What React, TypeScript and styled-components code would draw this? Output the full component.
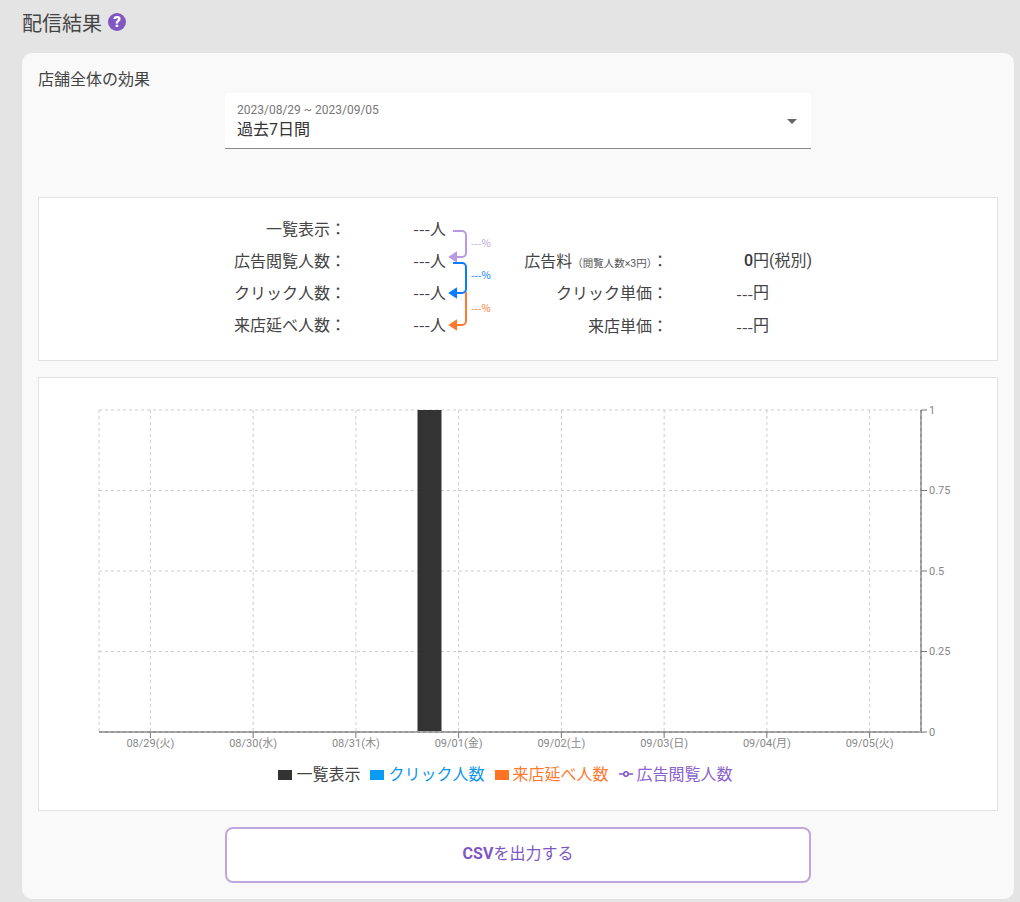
import React from 'react';
import styled, { createGlobalStyle } from 'styled-components';

const FONT = `Roboto, "Noto Sans CJK JP", sans-serif`;
const CJK_FONT = `"Noto Sans CJK JP", Roboto, sans-serif`;

const GlobalStyle = createGlobalStyle`
  html, body {
    margin: 0;
    background-color: #e4e4e4;
    overflow: hidden;
  }
  body {
    font-family: ${FONT};
    color: #444;
  }
`;

const Page = styled.div`
  width: 1020px;
  height: 902px;
  padding: 0 6px 0 22px;
  box-sizing: border-box;
`;

const Heading = styled.div`
  height: 53px;
  padding-bottom: 9px;
  box-sizing: border-box;
  display: flex;
  align-items: center;
  gap: 6px;
  font-size: 20px;
  color: #444;
`;

const HelpIcon = styled.span`
  width: 18px;
  height: 18px;
  border-radius: 50%;
  background-color: #7e57c2;
  color: #fff;
  font-size: 15px;
  font-weight: 900;
  line-height: 18px;
  text-align: center;
`;

const Card = styled.div`
  height: 846px;
  padding: 16px;
  box-sizing: border-box;
  background-color: #f9f9f9;
  border-radius: 10px;
`;

const CardTitle = styled.div`
  height: 24px;
  line-height: 22px;
  font-size: 16px;
  color: #444;
`;

const Select = styled.div`
  position: relative;
  width: 586px;
  height: 56px;
  margin: 0 0 48px 187px;
  padding: 9px 12px 0;
  box-sizing: border-box;
  background-color: #fff;
  border-bottom: 1px solid #8a8a8a;
  border-radius: 4px 4px 0 0;
`;

const SelectRange = styled.div`
  font-size: 12px;
  line-height: 16px;
  color: #777;
`;

const SelectValue = styled.div`
  font-size: 16px;
  line-height: 24px;
  color: #333;
`;

const SelectArrow = styled.span`
  position: absolute;
  right: 14px;
  top: 26px;
  border-left: 5px solid transparent;
  border-right: 5px solid transparent;
  border-top: 5px solid #666;
`;

const Panel = styled.div`
  background-color: #fff;
  border: 1px solid #e2e2e2;
`;

const StatsPanel = styled(Panel)`
  height: 164px;
  margin-bottom: 16px;
  padding: 14px 0 0 153px;
  box-sizing: border-box;
  display: flex;
`;

const StatsLeft = styled.div`
  padding-top: 2px;
  display: grid;
  grid-template-columns: 154px 100px;
  grid-auto-rows: 32px;
  height: 128px;
`;

const StatsRight = styled.div`
  margin-top: 33.5px;
  display: grid;
  grid-template-columns: 144px 1fr;
  grid-auto-rows: 32.5px;
  height: 98px;
`;

const StatLabel = styled.div`
  font-size: 16px;
  line-height: 32px;
  color: #444;
  text-align: right;
  white-space: nowrap;
`;

const StatValue = styled.div`
  font-family: ${CJK_FONT};
  font-size: 16px;
  line-height: 28px;
  color: #444;
  text-align: right;
  white-space: nowrap;
`;

const Note = styled.small`
  font-size: 10.5px;
  color: #555;
`;

const MoneyValue = styled.div`
  font-size: 16px;
  line-height: 30px;
  color: #444;
  white-space: nowrap;
  display: flex;
`;

const MoneyNumber = styled.span<{ $strong?: boolean }>`
  width: 85px;
  text-align: right;
  font-family: ${(p) => (p.$strong ? FONT : CJK_FONT)};
  font-weight: ${(p) => (p.$strong ? 500 : 400)};
  color: ${(p) => (p.$strong ? '#333' : '#444')};
`;

const FlowSvg = styled.svg`
  flex: 0 0 76px;
  display: block;
  margin-left: 2px;
`;

const FlowText = styled.text`
  font-size: 10px;
  font-family: ${CJK_FONT};
`;

const ChartPanel = styled(Panel)`
  height: 434px;
  margin-bottom: 16px;
  box-sizing: border-box;
`;

const ChartSvg = styled.svg`
  display: block;
`;

const TickText = styled.text`
  font-size: 11px;
  fill: #888;
  font-family: ${FONT};
`;

const Legend = styled.div`
  height: 34px;
  padding-right: 25px;
  display: flex;
  justify-content: center;
  align-items: center;
  gap: 10px;
`;

const LegendItem = styled.div<{ $color: string }>`
  display: flex;
  align-items: center;
  gap: 4px;
  font-size: 16px;
  color: ${(p) => p.$color};
`;

const LegendSwatch = styled.span<{ $color: string }>`
  width: 14px;
  height: 10px;
  margin-top: 3px;
  background-color: ${(p) => p.$color};
`;

const LegendLine = styled.svg`
  margin-top: 2px;
`;

const CsvButton = styled.button`
  display: block;
  width: 586px;
  height: 56px;
  margin-left: 187px;
  padding: 0 0 6px;
  background-color: #fff;
  border: 2px solid #c0a6de;
  border-radius: 8px;
  font-family: ${FONT};
  font-size: 16px;
  font-weight: 400;
  color: #7e57c2;
`;

const CsvLatin = styled.span`
  font-weight: 700;
`;

const LEFT = [
  ['一覧表示：', '---人'],
  ['広告閲覧人数：', '---人'],
  ['クリック人数：', '---人'],
  ['来店延べ人数：', '---人'],
];

const DATES = ['08/29(火)', '08/30(水)', '08/31(木)', '09/01(金)', '09/02(土)', '09/03(日)', '09/04(月)', '09/05(火)'];
const Y_TICKS = [
  { y: 32, label: '1' },
  { y: 112.5, label: '0.75' },
  { y: 193, label: '0.5' },
  { y: 273.5, label: '0.25' },
  { y: 354, label: '0' },
];

const PLOT_LEFT = 60;
const PLOT_RIGHT = 882;
const PLOT_TOP = 32;
const PLOT_BOTTOM = 354;
const BAND = (PLOT_RIGHT - PLOT_LEFT) / 8;

function Flow() {
  return (
    <FlowSvg width="76" height="130" viewBox="0 0 76 130" fill="none" strokeWidth="2">
      <path d="M5 19H14a4 4 0 0 1 4 4V41a4 4 0 0 1 -4 4H6" stroke="#b79ae0" />
      <path d="M8 41L2 45L8 49Z" fill="#b79ae0" stroke="#b79ae0" />
      <path d="M5 51H14a4 4 0 0 1 4 4V77a4 4 0 0 1 -4 4H6" stroke="#0a7cff" />
      <path d="M8 77L2 81L8 85Z" fill="#0a7cff" stroke="#0a7cff" />
      <path d="M18 80V109a4 4 0 0 1 -4 4H6" stroke="#ff7a2f" />
      <path d="M8 109L2 113L8 117Z" fill="#ff7a2f" stroke="#ff7a2f" />
      <FlowText x="23" y="35" fill="#c0a6de">---%</FlowText>
      <FlowText x="23" y="67" fill="#0a7cff">---%</FlowText>
      <FlowText x="23" y="100" fill="#ff7a2f">---%</FlowText>
    </FlowSvg>
  );
}

function Chart() {
  const axis = (
    <>
      <line x1={PLOT_LEFT} x2={PLOT_RIGHT + 1} y1={PLOT_BOTTOM} y2={PLOT_BOTTOM} />
      <line x1={PLOT_RIGHT} x2={PLOT_RIGHT} y1={PLOT_TOP} y2={PLOT_BOTTOM} />
    </>
  );
  return (
    <ChartSvg width="958" height="378" viewBox="0 0 958 378">
      <g stroke="#ccc" strokeDasharray="3 3" fill="none">
        {Y_TICKS.slice(0, 4).map((t) => (
          <line key={t.y} x1={PLOT_LEFT} x2={PLOT_RIGHT} y1={t.y} y2={t.y} />
        ))}
        <line x1={PLOT_LEFT} x2={PLOT_LEFT} y1={PLOT_TOP} y2={PLOT_BOTTOM} />
        {DATES.map((d, i) => (
          <line key={d} x1={PLOT_LEFT + BAND * (i + 0.5)} x2={PLOT_LEFT + BAND * (i + 0.5)} y1={PLOT_TOP} y2={PLOT_BOTTOM} />
        ))}
      </g>
      <rect x="378.5" y={PLOT_TOP} width="24" height={PLOT_BOTTOM - PLOT_TOP} fill="#333" />
      <g stroke="#aaa" strokeWidth="2">{axis}</g>
      <g stroke="#979797" strokeWidth="2" strokeDasharray="3 3">{axis}</g>
      <g stroke="#777">
        {Y_TICKS.map((t) => (
          <line key={t.y} x1={PLOT_RIGHT} x2={PLOT_RIGHT + 6} y1={t.y} y2={t.y} />
        ))}
        {DATES.map((d, i) => (
          <line key={d} x1={PLOT_LEFT + BAND * (i + 0.5)} x2={PLOT_LEFT + BAND * (i + 0.5)} y1={PLOT_BOTTOM} y2={PLOT_BOTTOM + 6} />
        ))}
      </g>
      {Y_TICKS.map((t) => (
        <TickText key={t.y} x={PLOT_RIGHT + 8} y={Math.floor(t.y) + 4}>{t.label}</TickText>
      ))}
      {DATES.map((d, i) => (
        <TickText key={d} x={PLOT_LEFT + BAND * (i + 0.5)} y={369} textAnchor="middle">{d}</TickText>
      ))}
    </ChartSvg>
  );
}

function App() {
  return (
    <Page>
      <GlobalStyle />
      <Heading>
        配信結果
        <HelpIcon>?</HelpIcon>
      </Heading>
      <Card>
        <CardTitle>店舗全体の効果</CardTitle>
        <Select>
          <SelectRange>2023/08/29 ~ 2023/09/05</SelectRange>
          <SelectValue>過去7日間</SelectValue>
          <SelectArrow />
        </Select>
        <StatsPanel>
          <StatsLeft>
            {LEFT.map(([label, value]) => (
              <React.Fragment key={label}>
                <StatLabel>{label}</StatLabel>
                <StatValue>{value}</StatValue>
              </React.Fragment>
            ))}
          </StatsLeft>
          <Flow />
          <StatsRight>
            <StatLabel>
              広告料<Note>（閲覧人数×3円）</Note>：
            </StatLabel>
            <MoneyValue>
              <MoneyNumber $strong>0</MoneyNumber>円(税別)
            </MoneyValue>
            <StatLabel>クリック単価：</StatLabel>
            <MoneyValue>
              <MoneyNumber>---</MoneyNumber>円
            </MoneyValue>
            <StatLabel>来店単価：</StatLabel>
            <MoneyValue>
              <MoneyNumber>---</MoneyNumber>円
            </MoneyValue>
          </StatsRight>
        </StatsPanel>
        <ChartPanel>
          <Chart />
          <Legend>
            <LegendItem $color="#444">
              <LegendSwatch $color="#333" />
              一覧表示
            </LegendItem>
            <LegendItem $color="#0a96f0">
              <LegendSwatch $color="#0a9bf5" />
              クリック人数
            </LegendItem>
            <LegendItem $color="#ff7a2f">
              <LegendSwatch $color="#ff7324" />
              来店延べ人数
            </LegendItem>
            <LegendItem $color="#8a63cc">
              <LegendLine width="14" height="10" viewBox="0 0 14 10" fill="#fff" stroke="#7e57c2" strokeWidth="1.5">
                <path d="M0 5H14" />
                <circle cx="7" cy="5" r="2.2" />
              </LegendLine>
              広告閲覧人数
            </LegendItem>
          </Legend>
        </ChartPanel>
        <CsvButton>
          <CsvLatin>CSV</CsvLatin>を出力する
        </CsvButton>
      </Card>
    </Page>
  );
}

export default App;
